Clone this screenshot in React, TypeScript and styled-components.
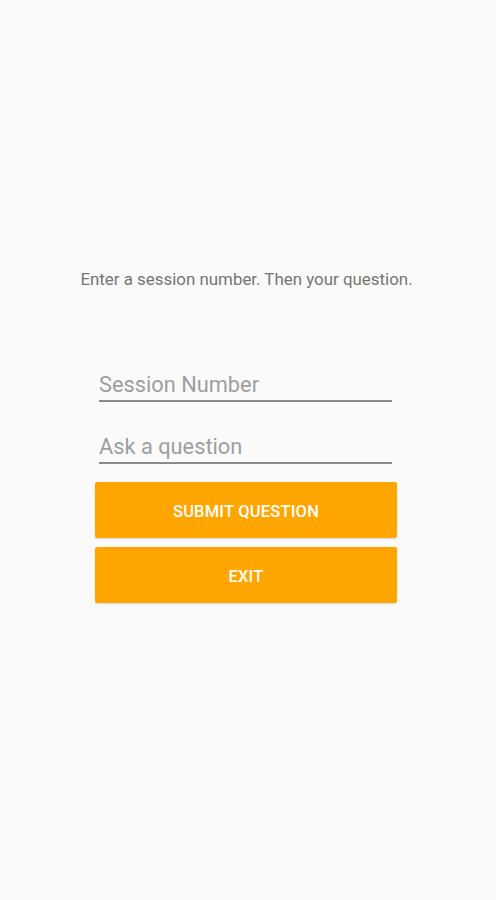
import React from "react";
import styled, { createGlobalStyle } from "styled-components";

const Global = createGlobalStyle`
  html, body { margin: 0; padding: 0; background: #fafafa; }
  body { font-family: Roboto, "Noto Sans", sans-serif; }
`;

const Page = styled.div`
  width: 496px;
  height: 900px;
  background: #fafafa;
  display: flex;
  flex-direction: column;
  align-items: center;
`;

const Hint = styled.p`
  margin: 269px 0 0 0;
  font-size: 16.9px;
  line-height: 20px;
  color: #757575;
  text-align: center;
  width: 496px;
  padding-right: 3px;
  box-sizing: border-box;
`;

const Form = styled.div`
  margin: 73px 4px 0 0;
  width: 302px;
  display: flex;
  flex-direction: column;
`;

const Field = styled.input`
  margin: 0 0 0 4px;
  width: 293px;
  height: 40px;
  box-sizing: border-box;
  border: none;
  border-bottom: 2px solid #8a8a8a;
  background: transparent;
  font-family: Roboto, sans-serif;
  font-size: 21.8px;
  color: #333;
  padding: 8px 0 2px 0;
  outline: none;
  &::placeholder { color: #9e9e9e; }
  & + & { margin-top: 22px; }
`;

const Button = styled.button<{ $top: number }>`
  margin-top: ${(p) => p.$top}px;
  width: 302px;
  height: 56px;
  padding: 3px 0 0 0;
  background: #ffa500;
  border: none;
  border-radius: 2px;
  color: #fff;
  font-family: Roboto, sans-serif;
  font-weight: 500;
  font-size: 16.5px;
  letter-spacing: 0.2px;
  text-transform: uppercase;
  box-shadow: 0 1px 2px rgba(0,0,0,0.15);
`;

export default function App() {
  return (
    <>
      <Global />
      <Page>
        <Hint>Enter a session number. Then your question.</Hint>
        <Form>
          <Field placeholder="Session Number" />
          <Field placeholder="Ask a question" />
          <Button $top={18}>Submit Question</Button>
          <Button $top={9}>Exit</Button>
        </Form>
      </Page>
    </>
  );
}
